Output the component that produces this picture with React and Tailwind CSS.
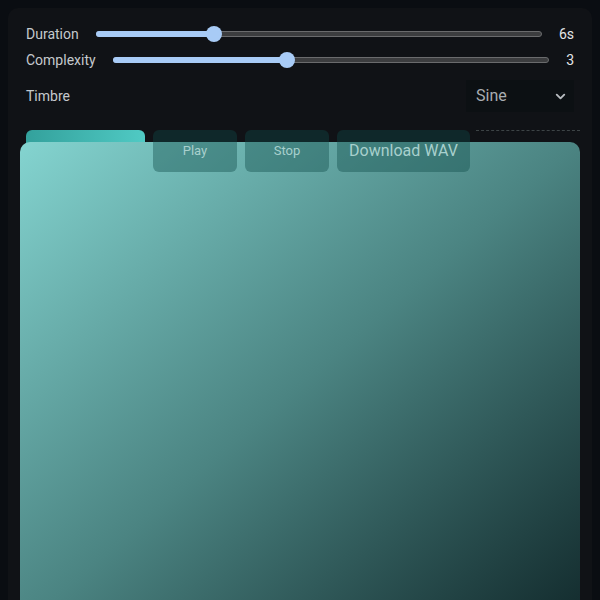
import React, { useState } from 'react';
import { ChevronDown } from 'lucide-react';

function Slider({ value, min, max, className }) {
  const pct = ((value - min) / (max - min)) * 100;
  return (
    <div className={`relative h-[6px] ${className}`}>
      <div className="absolute inset-0 rounded-full bg-[#3c3d3f] border border-[#6a6b6d]"></div>
      <div className="absolute left-0 top-0 h-full rounded-full bg-[#a8cbf6]" style={{ width: `${pct}%` }}></div>
      <div
        className="absolute top-1/2 w-4 h-4 -translate-x-1/2 -translate-y-1/2 rounded-full bg-[#a8cbf6]"
        style={{ left: `${pct}%` }}
      ></div>
    </div>
  );
}

export default function App() {
  const [duration] = useState(6);
  const [complexity] = useState(3);

  return (
    <div className="w-[600px] h-[600px] overflow-hidden bg-[#0a0d12] pt-2 px-2" style={{ fontFamily: 'Roboto, "Liberation Sans", sans-serif' }}>
      <div className="relative h-[620px] rounded-[10px] bg-[#101216] px-[18px] pt-[18px] text-[#c5c9cd]">
        {/* --- Réglages --- */}
        <div className="flex items-center h-4 text-[14px]">
          <span className="w-[70px]">Duration</span>
          <Slider value={duration} min={3.4} max={13.2} className="flex-1" />
          <span className="w-8 text-right text-[#e4e6e8]">{duration}s</span>
        </div>
        <div className="flex items-center h-4 mt-[10px] text-[14px]">
          <span className="w-[87px]">Complexity</span>
          <Slider value={complexity} min={1} max={6} className="flex-1" />
          <span className="w-[25px] text-right text-[#e4e6e8]">{complexity}</span>
        </div>
        <div className="flex items-center justify-between h-8 mt-3 text-[14px]">
          <span>Timbre</span>
          <div className="w-[108px] h-8 bg-[#0c1013] flex items-center justify-between pl-[10px] pr-[6px] text-[16px] text-[#a9adb1]">
            Sine
            <ChevronDown size={15} strokeWidth={3} className="text-[#b8bcc0]" />
          </div>
        </div>

        {/* --- Boutons --- */}
        <div className="flex items-start gap-2 mt-[18px]">
          <div className="w-[119px] h-[42px] rounded-[6px] bg-gradient-to-r from-[#33a19c] to-[#50cac4]"></div>
          <button className="relative z-10 w-[84px] h-[42px] rounded-[6px] bg-[#104a49]/40 text-[13px] text-[#a8d0cd]">Play</button>
          <button className="relative z-10 w-[84px] h-[42px] rounded-[6px] bg-[#104a49]/40 text-[13px] text-[#a8d0cd]">Stop</button>
          <button className="relative z-10 w-[133px] h-[42px] rounded-[6px] bg-[#104a49]/40 text-[16px] text-[#a8d0cd]">Download WAV</button>
          <div className="flex-1 h-[6px] mr-[-6px] ml-[-2px] border-t border-dashed border-[#3d4446]"></div>
        </div>

        {/* --- Carte dégradée --- */}
        <div className="absolute left-3 right-3 top-[134px] bottom-0 rounded-[10px] bg-gradient-to-br from-[#84d4d0] via-[#4b8482] to-[#122a2c]"></div>
      </div>
    </div>
  );
}
